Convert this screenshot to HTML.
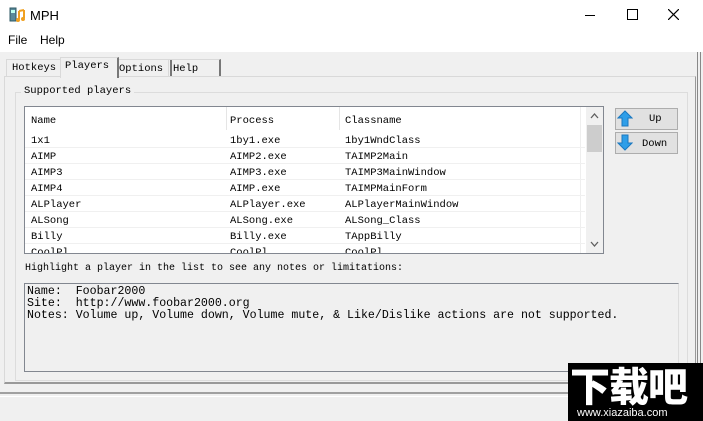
<!DOCTYPE html><html><head><style>
body{margin:0;width:703px;height:421px;overflow:hidden;background:#f0f0f0;position:relative;font-family:"Liberation Sans",sans-serif}
.a{position:absolute}
.m{font-family:"Liberation Mono","Noto Sans CJK SC",monospace;font-size:10px;color:#000}
.row{position:absolute;left:0;width:560px;height:15px;border-bottom:1px solid #f0f0f0}
.row span{position:absolute;top:3px}
</style></head><body>
<div class="a" style="left:0;top:0;width:703px;height:52px;background:#fff"></div>
<svg class="a" style="left:9px;top:7px" width="18" height="16"><rect x="1" y="1" width="6" height="13" fill="#5a8a9a" stroke="#2f5a66"/><rect x="2" y="3" width="4" height="3" fill="#bfe"/><path d="M10 4v8M15 3v8M10 4l5-1" stroke="#f0a020" stroke-width="2" fill="none"/><circle cx="9" cy="13" r="2" fill="#f0a020"/><circle cx="14" cy="12" r="2" fill="#f0a020"/></svg>
<div class="a" style="left:30px;top:8px;font-size:13px">MPH</div>
<div class="a" style="left:585px;top:15px;width:10px;height:1px;background:#000"></div>
<div class="a" style="left:627px;top:9px;width:9px;height:9px;border:1px solid #000"></div>
<svg class="a" style="left:668px;top:9px" width="11" height="11"><path d="M0 0L11 11M11 0L0 11" stroke="#000" stroke-width="1.2"/></svg>
<div class="a" style="left:8px;top:33px;font-size:12px">File</div>
<div class="a" style="left:40px;top:33px;font-size:12px">Help</div>
<div class="a m" style="left:6px;top:59px;width:52px;height:17px;border:1px solid #d9d9d9;border-bottom:none;font-size:10.5px;padding-left:5px;line-height:17px">Hotkeys</div>
<div class="a m" style="left:114px;top:59px;width:51px;height:17px;border:1px solid #d9d9d9;border-right:2px solid #777;border-bottom:none;font-size:10.5px;padding-left:4px;line-height:18px">Options</div>
<div class="a m" style="left:168px;top:59px;width:46px;height:17px;border:1px solid #d9d9d9;border-right:2px solid #777;border-bottom:none;font-size:10.5px;padding-left:4px;line-height:18px">Help</div>
<div class="a" style="left:4px;top:76px;width:690px;height:305px;border:1px solid #d9d9d9;border-right-color:#999;border-bottom:2px solid #999"></div>
<div class="a m" style="left:60px;top:57px;width:52px;height:20px;border:1px solid #d9d9d9;border-right:2px solid #777;border-bottom:none;background:#f0f0f0;font-size:10.5px;padding-left:4px;line-height:16px">Players</div>
<div class="a" style="left:15px;top:92px;width:671px;height:287px;border:1px solid #dcdcdc"></div>
<div class="a m" style="left:21px;top:85px;background:#f0f0f0;padding:0 3px;font-size:10.5px">Supported players</div>
<div class="a" style="left:24px;top:106px;width:578px;height:146px;border:1px solid #828790;background:#fff;overflow:hidden">
<div class="m" style="position:absolute;left:0;top:0;width:560px;height:23px;font-size:10.5px">
<span class="a" style="left:6px;top:8px">Name</span><span class="a" style="left:205px;top:8px">Process</span><span class="a" style="left:320px;top:8px">Classname</span></div>
<div class="a" style="left:201px;top:0;width:1px;height:23px;background:#e5e5e5"></div>
<div class="a" style="left:314px;top:0;width:1px;height:23px;background:#e5e5e5"></div>
<div class="a" style="left:555px;top:0;width:1px;height:146px;background:#eee"></div>
<div class="m" style="position:absolute;left:0;top:25px;font-size:10.5px">
<div class="row" style="top:0"><span style="left:6px">1x1</span><span style="left:205px">1by1.exe</span><span style="left:320px">1by1WndClass</span></div>
<div class="row" style="top:16px"><span style="left:6px">AIMP</span><span style="left:205px">AIMP2.exe</span><span style="left:320px">TAIMP2Main</span></div>
<div class="row" style="top:32px"><span style="left:6px">AIMP3</span><span style="left:205px">AIMP3.exe</span><span style="left:320px">TAIMP3MainWindow</span></div>
<div class="row" style="top:48px"><span style="left:6px">AIMP4</span><span style="left:205px">AIMP.exe</span><span style="left:320px">TAIMPMainForm</span></div>
<div class="row" style="top:64px"><span style="left:6px">ALPlayer</span><span style="left:205px">ALPlayer.exe</span><span style="left:320px">ALPlayerMainWindow</span></div>
<div class="row" style="top:80px"><span style="left:6px">ALSong</span><span style="left:205px">ALSong.exe</span><span style="left:320px">ALSong_Class</span></div>
<div class="row" style="top:96px"><span style="left:6px">Billy</span><span style="left:205px">Billy.exe</span><span style="left:320px">TAppBilly</span></div>
<div class="row" style="top:112px"><span style="left:6px">CoolPl</span><span style="left:205px">CoolPl</span><span style="left:320px">CoolPl</span></div>
</div>
<div class="a" style="left:561px;top:0;width:17px;height:146px;background:#f0f0f0"></div>
<div class="a" style="left:562px;top:18px;width:15px;height:27px;background:#cdcdcd"></div>
<svg class="a" style="left:565px;top:6px" width="9" height="6"><path d="M1 5L4.5 1L8 5" stroke="#606060" fill="none" stroke-width="1.3"/></svg>
<svg class="a" style="left:565px;top:134px" width="9" height="6"><path d="M1 1L4.5 5L8 1" stroke="#606060" fill="none" stroke-width="1.3"/></svg>
</div>
<div class="a" style="left:615px;top:108px;width:61px;height:20px;border:1px solid #adadad;background:#e1e1e1"></div>
<div class="a" style="left:615px;top:132px;width:61px;height:20px;border:1px solid #adadad;background:#e1e1e1"></div>
<svg class="a" style="left:617px;top:110px" width="16" height="17"><path d="M8 1L15 8H11V16H5V8H1Z" fill="#2e9ee8" stroke="#1a78c0"/></svg>
<svg class="a" style="left:617px;top:134px" width="16" height="17"><path d="M8 16L15 9H11V1H5V9H1Z" fill="#2e9ee8" stroke="#1a78c0"/></svg>
<div class="a m" style="left:649px;top:113px;font-size:10.5px">Up</div>
<div class="a m" style="left:642px;top:138px;font-size:10.5px">Down</div>
<div class="a m" style="left:25px;top:263px;font-size:10px">Highlight a player in the list to see any notes or limitations:</div>
<div class="a" style="left:24px;top:283px;width:653px;height:87px;border:1px solid #828790;border-right-color:#ddd;background:#f0f0f0"></div>
<div class="a" style="left:27px;top:286px;font-family:'Liberation Mono',monospace;font-size:11.6px;line-height:12px;white-space:pre">Name:  Foobar2000
Site:  http://www.foobar2000.org
Notes: Volume up, Volume down, Volume mute, &amp; Like/Dislike actions are not supported.</div>
<div class="a" style="left:0;top:392px;width:697px;height:2px;background:#a0a0a0"></div>
<div class="a" style="left:0;top:396px;width:697px;height:1px;background:#fff"></div>
<div class="a" style="left:697px;top:52px;width:1px;height:369px;background:#888"></div>
<div class="a" style="left:700px;top:52px;width:1px;height:369px;background:#888"></div>
<div class="a" style="left:568px;top:363px;width:135px;height:58px;background:#000"></div>
<div class="a" style="left:570px;top:360px;color:#fff;font-family:'Noto Sans CJK SC',sans-serif;font-size:40px;font-weight:900;line-height:48px;letter-spacing:-1px">下载吧</div>
<div class="a" style="left:577px;top:407px;color:#fff;font-size:11px">www.xiazaiba.com</div>
</body></html>
